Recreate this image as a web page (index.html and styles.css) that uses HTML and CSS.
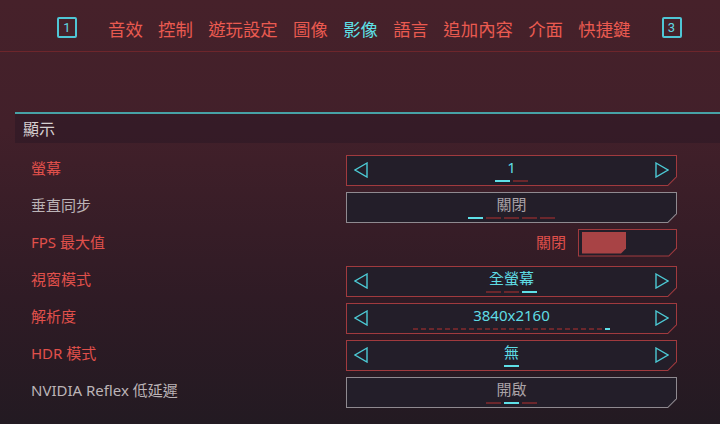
FILE: index.html
```html
<!DOCTYPE html>
<html lang="zh-Hant">
<head>
    <meta charset="UTF-8">
    <meta name="viewport" content="width=device-width, initial-scale=1.0">
    <title>設定 - 影像</title>
    <link rel="stylesheet" href="styles.css">
</head>
<body>

    <header class="tabs">
        <span class="key">1</span>
        <nav class="tab-list">
            <span class="tab">音效</span>
            <span class="tab">控制</span>
            <span class="tab">遊玩設定</span>
            <span class="tab">圖像</span>
            <span class="tab active">影像</span>
            <span class="tab">語言</span>
            <span class="tab">追加內容</span>
            <span class="tab">介面</span>
            <span class="tab">快捷鍵</span>
        </nav>
        <span class="key">3</span>
    </header>

    <section class="settings">
        <h2 class="group-title">顯示</h2>

        <div class="rows">
            <!-- 螢幕 -->
            <div class="row">
                <span class="label hot">螢幕</span>
                <div class="selector hot">
                    <div class="selector-inner">
                        <svg class="arrow" viewBox="0 0 14 16"><path d="M13 1 L1 8 L13 15 Z"/></svg>
                        <div class="value">
                            <span class="value-text">1</span>
                            <div class="dashes"><i class="on"></i><i></i></div>
                        </div>
                        <svg class="arrow" viewBox="0 0 14 16"><path d="M1 1 L13 8 L1 15 Z"/></svg>
                    </div>
                </div>
            </div>

            <!-- 垂直同步 -->
            <div class="row">
                <span class="label">垂直同步</span>
                <div class="selector">
                    <div class="selector-inner">
                        <div class="value">
                            <span class="value-text dim">關閉</span>
                            <div class="dashes"><i class="on"></i><i></i><i></i><i></i><i></i></div>
                        </div>
                    </div>
                </div>
            </div>

            <!-- FPS -->
            <div class="row">
                <span class="label hot">FPS 最大值</span>
                <div class="toggle-wrap">
                    <span class="toggle-text">關閉</span>
                    <div class="toggle">
                        <div class="toggle-inner">
                            <div class="toggle-fill"></div>
                        </div>
                    </div>
                </div>
            </div>

            <!-- 視窗模式 -->
            <div class="row">
                <span class="label hot">視窗模式</span>
                <div class="selector hot">
                    <div class="selector-inner">
                        <svg class="arrow" viewBox="0 0 14 16"><path d="M13 1 L1 8 L13 15 Z"/></svg>
                        <div class="value">
                            <span class="value-text">全螢幕</span>
                            <div class="dashes"><i></i><i></i><i class="on"></i></div>
                        </div>
                        <svg class="arrow" viewBox="0 0 14 16"><path d="M1 1 L13 8 L1 15 Z"/></svg>
                    </div>
                </div>
            </div>

            <!-- 解析度 -->
            <div class="row">
                <span class="label hot">解析度</span>
                <div class="selector hot">
                    <div class="selector-inner">
                        <svg class="arrow" viewBox="0 0 14 16"><path d="M13 1 L1 8 L13 15 Z"/></svg>
                        <div class="value">
                            <span class="value-text">3840x2160</span>
                            <div class="dashes small" id="res-dashes"></div>
                        </div>
                        <svg class="arrow" viewBox="0 0 14 16"><path d="M1 1 L13 8 L1 15 Z"/></svg>
                    </div>
                </div>
            </div>

            <!-- HDR -->
            <div class="row">
                <span class="label hot">HDR 模式</span>
                <div class="selector hot">
                    <div class="selector-inner">
                        <svg class="arrow" viewBox="0 0 14 16"><path d="M13 1 L1 8 L13 15 Z"/></svg>
                        <div class="value">
                            <span class="value-text">無</span>
                            <div class="dashes"><i class="on"></i></div>
                        </div>
                        <svg class="arrow" viewBox="0 0 14 16"><path d="M1 1 L13 8 L1 15 Z"/></svg>
                    </div>
                </div>
            </div>

            <!-- Reflex -->
            <div class="row">
                <span class="label">NVIDIA Reflex 低延遲</span>
                <div class="selector">
                    <div class="selector-inner">
                        <div class="value">
                            <span class="value-text dim">開啟</span>
                            <div class="dashes"><i></i><i class="on"></i><i></i></div>
                        </div>
                    </div>
                </div>
            </div>
        </div>
    </section>

    <script>
        // resolution list: 25 entries, last one picked
        const resDashes = document.getElementById('res-dashes');
        for (let i = 0; i < 25; i++) {
            const d = document.createElement('i');
            if (i === 24) d.className = 'on';
            resDashes.appendChild(d);
        }
    </script>

</body>
</html>
```

FILE: styles.css
```css
/* --- Base --- */
body {
    margin: 0;
    width: 720px;
    height: 424px;
    overflow: hidden;
    font-family: "Noto Sans", "Noto Sans CJK TC", sans-serif;
    background: linear-gradient(180deg, #46212a 0%, #42202a 30%, #2f1b25 70%, #231a22 100%);
}

/* --- Top tab bar --- */
.tabs {
    display: flex;
    align-items: center;
    height: 52px;
    padding-left: 57px;
    padding-top: 3px;
    box-sizing: border-box;
    border-bottom: 1px solid rgba(160, 45, 45, 0.45);
}

.key {
    width: 16px;
    height: 17px;
    border: 2px solid #4fc6d6;
    border-radius: 2px;
    color: #5fd8e2;
    font-family: "Roboto", sans-serif;
    font-size: 13px;
    line-height: 17px;
    text-align: center;
}

.tab-list {
    display: flex;
    gap: 15.3px;
    margin: 0 31px;
}

.tab {
    font-family: "Noto Sans CJK TC", sans-serif;
    font-size: 17.4px;
    color: #ea5a50;
    line-height: 22px;
    margin-top: 4px;
}

.tab.active {
    color: #5ee2e8;
}

/* --- Settings block --- */
.settings {
    margin-top: 60px;
    margin-left: 15px;
}

.group-title {
    margin: 0;
    height: 29px;
    padding-left: 8px;
    border-top: 2px solid #47a2a6;
    background: rgba(28, 20, 34, 0.32);
    font-family: "Noto Sans CJK TC", sans-serif;
    font-weight: normal;
    font-size: 16px;
    line-height: 29px;
    color: #d6cfd0;
}

.rows {
    padding-top: 9px;
    padding-left: 16px;
}

.row {
    display: grid;
    grid-template-columns: 315px 331px;
    align-items: center;
    height: 37px;
}

.label {
    font-size: 15px;
    color: #bcb4b7;
    padding-bottom: 7px;
}

.label.hot {
    color: #e0504b;
}

/* --- Selector box with cut corner --- */
.selector {
    height: 31px;
    padding: 1px;
    box-sizing: border-box;
    background: #8f8a90;
    clip-path: polygon(0 0, 100% 0, 100% calc(100% - 9px), calc(100% - 9px) 100%, 0 100%);
}

.selector.hot {
    background: #a13a3e;
}

.selector-inner {
    height: 100%;
    display: flex;
    align-items: center;
    justify-content: space-between;
    padding: 0 7px;
    background: #231e29;
    clip-path: polygon(0 0, 100% 0, 100% calc(100% - 8.4px), calc(100% - 8.4px) 100%, 0 100%);
}

.arrow {
    width: 14px;
    height: 16px;
    margin-bottom: 1px;
    fill: none;
    stroke: #4cc9d4;
    stroke-width: 1.4;
}

.value {
    flex: 1;
    display: flex;
    flex-direction: column;
    align-items: center;
    margin-top: -2px;
}

.value-text {
    font-size: 15px;
    line-height: 18px;
    color: #5fdce4;
}

.value-text.dim {
    color: #aaa3a7;
}

.dashes {
    display: flex;
    gap: 3px;
    margin-top: 4px;
}

.dashes i {
    width: 15px;
    height: 2px;
    background: #6b272c;
}

.dashes i.on {
    background: #5ee0e8;
}

.dashes.small i {
    width: 5px;
}

/* --- FPS toggle --- */
.toggle-wrap {
    display: flex;
    align-items: center;
    justify-content: flex-end;
    gap: 12px;
    margin-bottom: 4px;
}

.toggle-text {
    font-size: 15px;
    color: #e0504b;
    margin-bottom: 2px;
}

.toggle {
    width: 99px;
    height: 28px;
    padding: 1px;
    box-sizing: border-box;
    background: #a13a3e;
    clip-path: polygon(0 0, 100% 0, 100% calc(100% - 8px), calc(100% - 8px) 100%, 0 100%);
}

.toggle-inner {
    height: 100%;
    padding: 2px 3px;
    box-sizing: border-box;
    background: #231e29;
    clip-path: polygon(0 0, 100% 0, 100% calc(100% - 7.4px), calc(100% - 7.4px) 100%, 0 100%);
}

.toggle-fill {
    width: 44px;
    height: 100%;
    background: #a84345;
    clip-path: polygon(0 0, 100% 0, 100% calc(100% - 5px), calc(100% - 5px) 100%, 0 100%);
}
```
